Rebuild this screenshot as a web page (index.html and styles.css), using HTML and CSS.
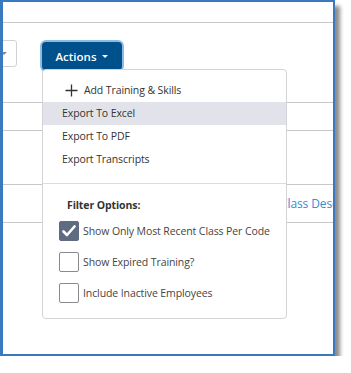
FILE: index.html
```html
<!DOCTYPE html>
<html lang="en">
<head>
  <meta charset="UTF-8">
  <meta name="viewport" content="width=device-width, initial-scale=1.0">
  <title>Training Actions</title>
  <link rel="stylesheet" href="styles.css">
</head>
<body>
  <div class="window">
    <div class="topbar"></div>

    <div class="toolbar">
      <div class="select-stub"><span class="caret grey"></span></div>
      <button class="btn-actions">Actions <span class="caret"></span></button>
    </div>

    <div class="row row-1"></div>
    <div class="row row-2"></div>
    <div class="row row-3"><a class="cell-link">Class Description</a></div>

    <!-- dropdown opened from the Actions button -->
    <div class="menu">
      <div class="menu-item add-item">
        <svg class="plus" width="13" height="13" viewBox="0 0 13 13">
          <path d="M6.5 0.5 V12.5 M0.5 6.5 H12.5" stroke="#333" stroke-width="1.3" fill="none"/>
        </svg>
        Add Training &amp; Skills
      </div>
      <div class="menu-item active">Export To Excel</div>
      <div class="menu-item">Export To PDF</div>
      <div class="menu-item">Export Transcripts</div>

      <div class="menu-divider"></div>

      <div class="filter-title">Filter Options:</div>
      <label class="check-row">
        <span class="box checked">
          <svg width="14" height="12" viewBox="0 0 14 12">
            <path d="M1.5 6.5 L5 10 L12.5 1.5" stroke="#fff" stroke-width="2.6" fill="none" stroke-linecap="round" stroke-linejoin="round"/>
          </svg>
        </span>
        Show Only Most Recent Class Per Code
      </label>
      <label class="check-row">
        <span class="box"></span>
        Show Expired Training?
      </label>
      <label class="check-row">
        <span class="box"></span>
        Include Inactive Employees
      </label>
    </div>
  </div>
</body>
</html>
```

FILE: styles.css
```css
body {
  margin: 0;
  background: #fff;
  font-family: "Open Sans", Arial, sans-serif;
  font-size: 10.5px;
  letter-spacing: -0.1px;
  color: #333;
}
.window {
  position: relative;
  width: 330px;
  height: 352px;
  border: 2px solid #3a78bf;
  border-left-width: 3px;
  background: #fff;
  overflow: hidden;
  box-shadow: 5px 6px 4px rgba(0,0,0,0.45);
}
.topbar {
  height: 20px;
  border-bottom: 1px solid #c8c8cc;
}
.toolbar {
  height: 62px;
  padding-top: 17px;
  display: flex;
  align-items: flex-start;
  gap: 25px;
  border-bottom: 1px solid #c8c8cc;
}
.select-stub {
  width: 58px;
  height: 25px;
  margin-left: -55px;
  border: 1px solid #d2d2d6;
  border-radius: 3px;
  display: flex;
  align-items: center;
  justify-content: flex-end;
  padding-right: 9px;
  box-sizing: content-box;
}
.caret {
  display: inline-block;
  width: 0;
  height: 0;
  border-left: 3px solid transparent;
  border-right: 3px solid transparent;
  border-top: 3px solid #fff;
  vertical-align: middle;
  margin-left: 3px;
  margin-bottom: 2px;
}
.caret.grey {
  border-top-color: #888;
  margin: 0;
}
.btn-actions {
  margin-top: 2px;
  width: 80px;
  height: 28px;
  background: #00508c;
  color: #fff;
  border: none;
  border-radius: 4px;
  box-shadow: 0 0 0 2px #8dbbe4;
  font-family: "Open Sans", Arial, sans-serif;
  font-size: 11.5px;
  font-weight: 600;
  letter-spacing: 0;
  padding: 0;
}
.row {
  border-bottom: 1px solid #c8c8cc;
}
.row-1 { height: 27px; }
.row-2 { height: 53px; }
.row-3 {
  height: 37px;
  display: flex;
  align-items: center;
  white-space: nowrap;
}
.cell-link {
  margin-left: 277px;
  color: #3b8ad6;
  font-size: 12px;
}
.menu {
  position: absolute;
  left: 39px;
  top: 67px;
  width: 245px;
  height: 250px;
  box-sizing: border-box;
  padding-top: 9px;
  background: #fff;
  border: 1px solid #d4d4d8;
  border-radius: 4px;
}
.menu-item {
  height: 23px;
  line-height: 23px;
  padding-left: 19px;
  white-space: nowrap;
}
.menu-item.active {
  background: #e2e3ea;
}
.add-item {
  display: flex;
  align-items: center;
  padding-left: 22px;
  gap: 6px;
}
.menu-divider {
  height: 1px;
  background: #dcdce0;
  margin-top: 12px;
}
.filter-title {
  margin-top: 13px;
  padding-left: 24px;
  line-height: 16px;
  font-weight: 700;
  color: #333;
}
.check-row {
  display: flex;
  align-items: center;
  gap: 4px;
  padding-left: 16px;
  margin-top: 8px;
  white-space: nowrap;
  color: #444;
}
.check-row + .check-row {
  margin-top: 11px;
}
.box {
  width: 20px;
  height: 20px;
  box-sizing: border-box;
  border: 1px solid #8a8a8e;
  border-radius: 2px;
  display: flex;
  align-items: center;
  justify-content: center;
  flex: none;
}
.box.checked {
  background: #5f6b80;
  border-color: #5f6b80;
}
```
